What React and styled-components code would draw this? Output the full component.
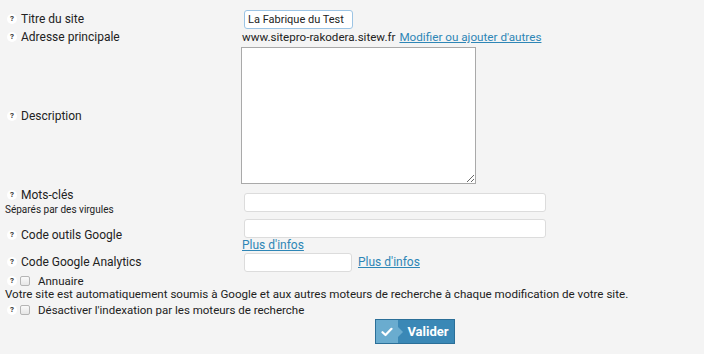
import React from 'react';
import styled, { createGlobalStyle } from 'styled-components';

const GlobalStyle = createGlobalStyle`
  body {
    margin: 0;
    background: #f4f4f4;
    font-family: Roboto, "Liberation Sans", Arial, sans-serif;
    color: #222;
  }
`

const Form = styled.form`
  padding: 9px 0 0 5px;
  width: 699px;
`

const Row = styled.div`
  display: grid;
  grid-template-columns: 237px 1fr;
  align-items: center;
  padding: ${p => p.pad || '0'};
`

const Label = styled.div`
  display: flex;
  flex-direction: column;
  font-size: 12px;
  line-height: 16px;
`

const LabelLine = styled.div`
  display: flex;
  align-items: center;
`

const Help = styled.span`
  display: inline-flex;
  align-items: center;
  justify-content: center;
  width: 10px;
  height: 10px;
  border-radius: 50%;
  background: #fff;
  font-size: 8px;
  font-weight: bold;
  color: #333;
  margin: 0 ${p => p.gap || 4}px 0 2px;
  line-height: 1;
`

const Hint = styled.div`
  font-size: 10px;
  line-height: 13px;
  color: #222;
`

const Field = styled.div`
  display: flex;
  flex-direction: ${p => (p.column ? 'column' : 'row')};
  align-items: ${p => (p.column ? 'flex-start' : 'center')};
  font-size: 11.6px;
  line-height: 16px;
`

const TextInput = styled.input`
  box-sizing: border-box;
  width: ${p => p.w}px;
  height: ${p => p.h || 19}px;
  margin: 1px 0 0 2px;
  border: 1px solid ${p => (p.focused ? '#9cc4e4' : '#dcdcdc')};
  border-radius: 3px;
  background: #fff;
  font-family: Roboto, "Liberation Sans", Arial, sans-serif;
  font-size: 11px;
  padding: 0 3px;
  color: #222;
  outline: none;
`

const Area = styled.textarea`
  box-sizing: border-box;
  width: 235px;
  height: 137px;
  margin: 2px 0 2px -1px;
  border: 1px solid #a9a9a9;
  background: #fff;
  display: block;
`

const Link = styled.a`
  color: #2e86b6;
  text-decoration: underline;
  cursor: pointer;
  margin-left: ${p => p.ml || 0}px;
  font-size: ${p => p.size || 12}px;
  line-height: 14px;
`

const CheckRow = styled.div`
  display: flex;
  align-items: center;
  font-size: 11.5px;
  line-height: 14px;
  margin-top: ${p => p.mt || 0}px;
`

const Box = styled.span`
  box-sizing: border-box;
  width: 10px;
  height: 10px;
  border: 1px solid #b5b5b5;
  border-radius: 2px;
  background: linear-gradient(#fafafa, #e6e6e6);
  margin-right: 8px;
`

const Notice = styled.div`
  font-size: 11.6px;
  line-height: 12px;
`

const Actions = styled.div`
  display: flex;
  justify-content: flex-start;
  padding: 2px 0 0 370px;
`

const Submit = styled.button`
  display: flex;
  align-items: stretch;
  width: 80px;
  height: 25px;
  padding: 0;
  border: 1px solid #2b6f98;
  background: #3a88b6;
  cursor: pointer;
`

const Tick = styled.span`
  position: relative;
  width: 22px;
  display: flex;
  align-items: center;
  justify-content: center;
  background: #6aaccf;
  &::after {
    content: '';
    position: absolute;
    right: -5px;
    top: 50%;
    margin-top: -5px;
    border-left: 5px solid #6aaccf;
    border-top: 5px solid transparent;
    border-bottom: 5px solid transparent;
  }
`

const Caption = styled.span`
  flex: 1;
  display: flex;
  align-items: center;
  justify-content: center;
  padding-left: 4px;
  color: #fff;
  font-family: Roboto, "Liberation Sans", Arial, sans-serif;
  font-weight: bold;
  font-size: 13px;
`

function FieldLabel({ children, hint }) {
  return (
    <Label>
      <LabelLine><Help>?</Help>{children}</LabelLine>
      {hint && <Hint>{hint}</Hint>}
    </Label>
  )
}

export default function App() {
  return (
    <>
      <GlobalStyle />
      <Form onSubmit={e => e.preventDefault()}>
        <Row>
          <FieldLabel>Titre du site</FieldLabel>
          <Field><TextInput w={109} focused defaultValue="La Fabrique du Test" /></Field>
        </Row>
        <Row>
          <FieldLabel>Adresse principale</FieldLabel>
          <Field>www.sitepro-rakodera.sitew.fr<Link ml={4} size={11.7}>Modifier ou ajouter d'autres</Link></Field>
        </Row>
        <Row>
          <FieldLabel>Description</FieldLabel>
          <Field><Area /></Field>
        </Row>
        <Row pad="1px 0 1px">
          <FieldLabel hint="Séparés par des virgules">Mots-clés</FieldLabel>
          <Field><TextInput w={302} /></Field>
        </Row>
        <Row pad="1px 0 0">
          <FieldLabel>Code outils Google</FieldLabel>
          <Field column>
            <TextInput w={302} />
            <Link>Plus d'infos</Link>
          </Field>
        </Row>
        <Row>
          <FieldLabel>Code Google Analytics</FieldLabel>
          <Field><TextInput w={108} h={19} /><Link ml={6}>Plus d'infos</Link></Field>
        </Row>
        <CheckRow mt={2}><Help gap={3}>?</Help><Box />Annuaire</CheckRow>
        <Notice>Votre site est automatiquement soumis à Google et aux autres moteurs de recherche à chaque modification de votre site.</Notice>
        <CheckRow mt={3}><Help gap={3}>?</Help><Box />Désactiver l'indexation par les moteurs de recherche</CheckRow>
        <Actions>
          <Submit type="submit">
            <Tick>
              <svg width="12" height="10" viewBox="0 0 12 10">
                <path d="M1.5 5.2 L4.5 8 L10.5 1.8" fill="none" stroke="#fff" strokeWidth="2.2" strokeLinecap="round" strokeLinejoin="round" />
              </svg>
            </Tick>
            <Caption>Valider</Caption>
          </Submit>
        </Actions>
      </Form>
    </>
  )
}
